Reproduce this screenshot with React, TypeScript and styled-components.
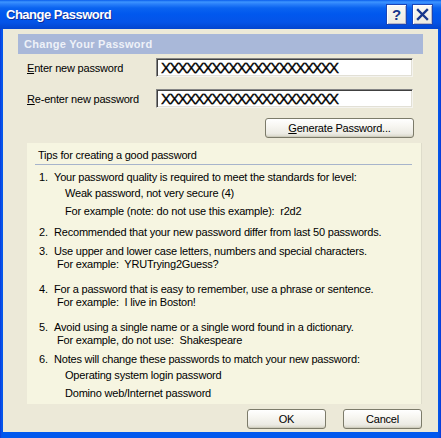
import React from 'react';
import styled, { createGlobalStyle } from 'styled-components';

const Global = createGlobalStyle`
  html, body { margin: 0; padding: 0; background: #ffffff; }
  body { font-family: "Liberation Sans", Arial, sans-serif; }
  * { box-sizing: border-box; }
`;

const Window = styled.div`
  width: 441px;
  height: 438px;
  display: flex;
  flex-direction: column;
  background: linear-gradient(to right, #0831D9 0px, #0A50E6 1px, #0058EE 3px, #0058EE 438px, #0A4CDD 440px, #0831D9 441px);
  overflow: hidden;
`;

const TitleBar = styled.div`
  height: 29px;
  flex: 0 0 29px;
  display: flex;
  align-items: center;
  padding: 0 8px 0 6px;
  background: linear-gradient(to bottom, #0A5DEC 0px, #3D95FF 2px, #2A80FA 4px, #0A63F0 8px, #0058EE 14px, #0454E8 22px, #0349D6 27px, #0344CF 29px);
`;

const Title = styled.div`
  flex: 1;
  color: #ffffff;
  font-weight: bold;
  font-size: 13px;
  letter-spacing: -0.5px;
  text-shadow: 1px 1px 0 #0F2F9A;
  padding-bottom: 1px;
`;

const TitleButtons = styled.div`
  display: flex;
  gap: 5px;
`;

const CaptionButton = styled.div`
  width: 21px;
  height: 21px;
  display: flex;
  align-items: center;
  justify-content: center;
  background: linear-gradient(to bottom, #FAF9F4, #ECEAE0);
  border: 1px solid #1A46B8;
  box-shadow: inset 1px 1px 0 #FFFFFF, inset -1px -1px 0 #B8B8C8;
  color: #17378C;
  font-weight: bold;
  font-size: 15px;
  font-family: "Liberation Sans", Arial, sans-serif;
`;

const Client = styled.div`
  flex: 1;
  margin: 0 3px 6px 3px;
  background: #ECE9D8;
  padding: 5px 15px 0 15px;
  display: flex;
  flex-direction: column;
  font-size: 11px;
  letter-spacing: -0.2px;
  color: #000000;
`;

const HeaderBand = styled.div`
  height: 20px;
  line-height: 20px;
  padding-left: 6px;
  background: #A9B8D9;
  color: #EEF1F8;
  font-weight: bold;
  font-size: 11px;
  letter-spacing: 0.3px;
`;

const FieldRow = styled.div<{ $mt: number }>`
  display: flex;
  align-items: center;
  margin-top: ${p => p.$mt}px;
  padding-left: 9px;
`;

const FieldLabel = styled.label`
  width: 129px;
  font-size: 11px;
  white-space: nowrap;
`;

const Accel = styled.span`
  text-decoration: underline;
`;

const PasswordBox = styled.div`
  width: 257px;
  height: 19px;
  background: #ffffff;
  border-top: 1px solid #858585;
  border-left: 1px solid #858585;
  border-bottom: 1px solid #F4F3EE;
  border-right: 1px solid #F4F3EE;
  box-shadow: inset 1px 1px 0 #404040, inset -1px -1px 0 #E2E0D6;
  padding: 0 0 0 4px;
  font-size: 15px;
  font-weight: normal;
  letter-spacing: -1.6px;
  line-height: 17px;
  -webkit-text-stroke: 0.4px #000;
  overflow: hidden;
  white-space: nowrap;
`;

const GenerateRow = styled.div`
  display: flex;
  justify-content: flex-end;
  margin-top: 10px;
  padding-right: 9px;
`;

const PushButton = styled.button<{ $w: number }>`
  width: ${p => p.$w}px;
  height: 20px;
  padding: 0;
  border: 1px solid #7C7B6A;
  border-radius: 3px;
  background: linear-gradient(to bottom, #FFFFFF 0%, #F7F6F1 40%, #ECEBE4 80%, #D8D6C8 100%);
  box-shadow: inset 0 -1px 0 #CFCDBE;
  font-family: "Liberation Sans", Arial, sans-serif;
  font-size: 11px;
  letter-spacing: -0.2px;
  color: #000000;
`;

const Tips = styled.div`
  margin: 5px 1px 0 9px;
  height: 261px;
  background: #F6F5E1;
  padding: 6px 0 0 0;
  border-right: 1px solid #DEDCCB;
  white-space: pre;
`;

const TipsHeading = styled.div`
  line-height: 13px;
  padding-left: 11px;
`;

const Rule = styled.div`
  height: 1px;
  margin: 2px 9px 0 8px;
  background: #A7B4CB;
`;

const Line = styled.div<{ $mt: number; $indent: number }>`
  display: flex;
  line-height: 13px;
  height: 13px;
  margin-top: ${p => p.$mt}px;
  padding-left: ${p => p.$indent}px;
`;

const Num = styled.span`
  width: 15px;
  flex: 0 0 15px;
`;

const ButtonRow = styled.div`
  display: flex;
  justify-content: flex-end;
  gap: 17px;
  margin-top: 5px;
  padding-right: 1px;
`;

type TipLine = { n?: string; text: string; mt: number; indent: number };

const lines: TipLine[] = [
  { n: '1.', text: 'Your password quality is required to meet the standards for level:', mt: 6, indent: 12 },
  { text: 'Weak password, not very secure (4)', mt: 3, indent: 38 },
  { text: 'For example (note: do not use this example):  r2d2', mt: 5, indent: 38 },
  { n: '2.', text: 'Recommended that your new password differ from last 50 passwords.', mt: 8, indent: 12 },
  { n: '3.', text: 'Use upper and lower case letters, numbers and special characters.', mt: 6, indent: 12 },
  { text: 'For example:  YRUTrying2Guess?', mt: 0, indent: 30 },
  { n: '4.', text: 'For a password that is easy to remember, use a phrase or sentence.', mt: 12, indent: 12 },
  { text: 'For example:  I live in Boston!', mt: 0, indent: 30 },
  { n: '5.', text: 'Avoid using a single name or a single word found in a dictionary.', mt: 12, indent: 12 },
  { text: 'For example, do not use:  Shakespeare', mt: 0, indent: 30 },
  { n: '6.', text: 'Notes will change these passwords to match your new password:', mt: 6, indent: 12 },
  { text: 'Operating system login password', mt: 3, indent: 38 },
  { text: 'Domino web/Internet password', mt: 5, indent: 38 },
];

const mask = 'X'.repeat(21);

export default function App() {
  return (
    <>
      <Global />
      <Window>
        <TitleBar>
          <Title>Change Password</Title>
          <TitleButtons>
            <CaptionButton>?</CaptionButton>
            <CaptionButton>
              <svg width="13" height="13" viewBox="0 0 13 13">
                <path d="M2 2 L11 11 M11 2 L2 11" stroke="#17378C" strokeWidth="2.4" strokeLinecap="square" />
              </svg>
            </CaptionButton>
          </TitleButtons>
        </TitleBar>
        <Client>
          <HeaderBand>Change Your Password</HeaderBand>
          <FieldRow $mt={4}>
            <FieldLabel><Accel>E</Accel>nter new password</FieldLabel>
            <PasswordBox>{mask}</PasswordBox>
          </FieldRow>
          <FieldRow $mt={12}>
            <FieldLabel><Accel>R</Accel>e-enter new password</FieldLabel>
            <PasswordBox>{mask}</PasswordBox>
          </FieldRow>
          <GenerateRow>
            <PushButton $w={149}><Accel>G</Accel>enerate Password...</PushButton>
          </GenerateRow>
          <Tips>
            <TipsHeading>Tips for creating a good password</TipsHeading>
            <Rule />
            {lines.map((l, i) => (
              <Line key={i} $mt={l.mt} $indent={l.indent}>
                {l.n && <Num>{l.n}</Num>}
                <span>{l.text}</span>
              </Line>
            ))}
          </Tips>
          <ButtonRow>
            <PushButton $w={79}>OK</PushButton>
            <PushButton $w={79}>Cancel</PushButton>
          </ButtonRow>
        </Client>
      </Window>
    </>
  );
}
